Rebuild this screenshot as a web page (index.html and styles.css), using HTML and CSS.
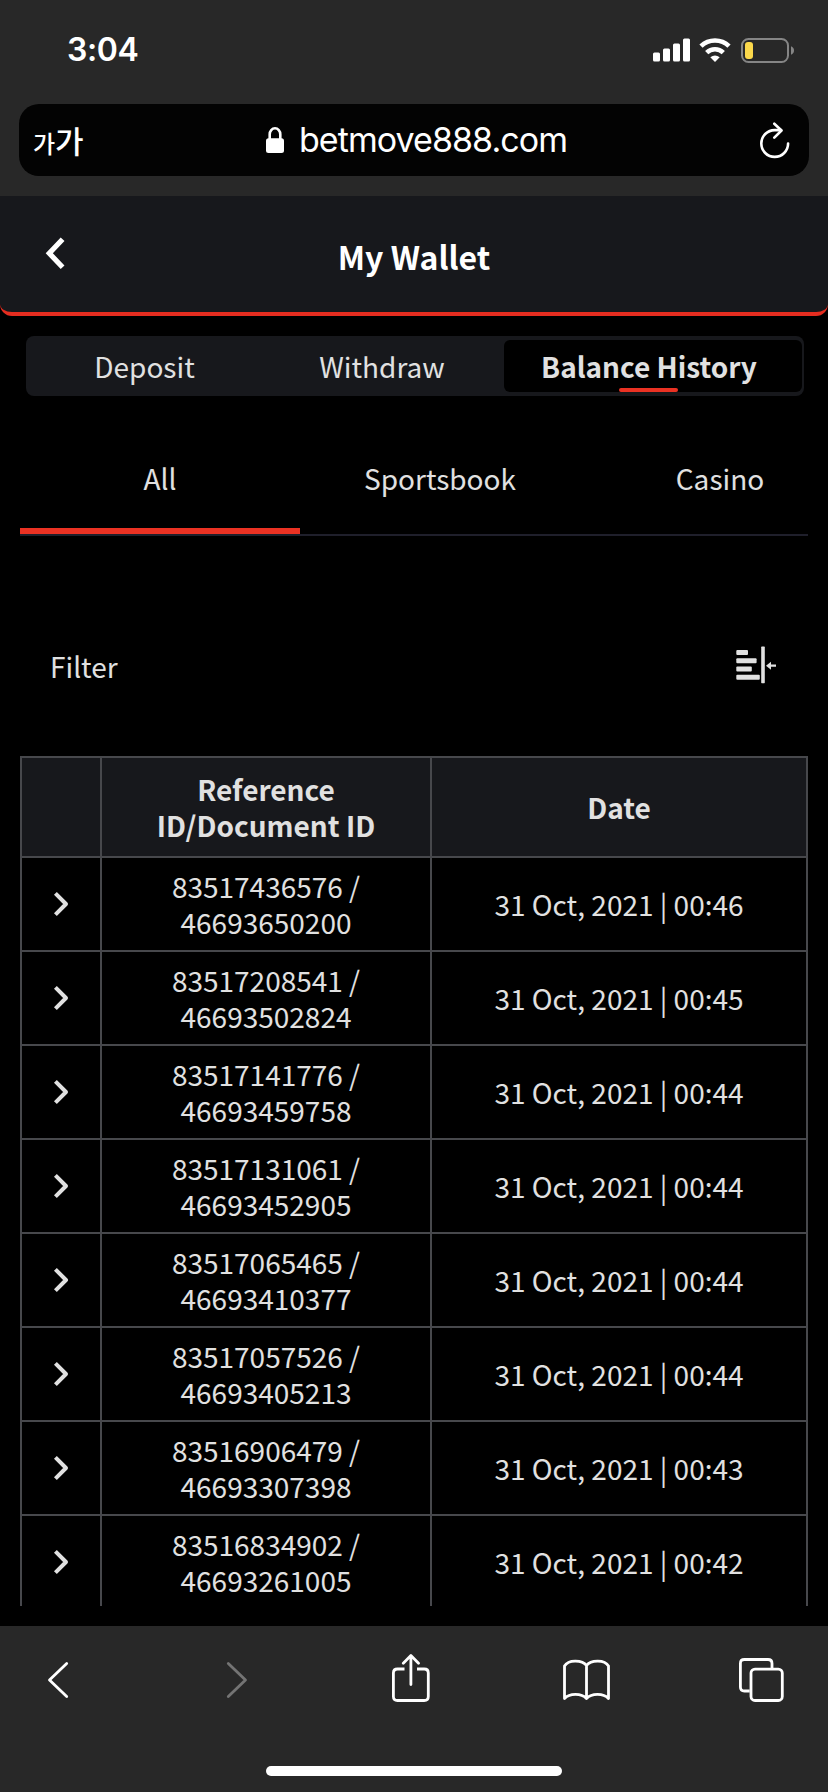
FILE: index.html
```html
<!DOCTYPE html>
<html lang="en">
<head>
<meta charset="utf-8">
<title>My Wallet</title>
<link rel="stylesheet" href="styles.css">
</head>
<body>
<div class="phone">
  <div class="browser-top">
    <div class="status">
      <span class="time">3:04</span>
      <div class="status-icons">
        <svg class="signal" viewBox="0 0 37 25"><rect x="0" y="14.5" width="7" height="9" rx="1.5"/><rect x="10" y="10.5" width="7" height="13" rx="1.5"/><rect x="20" y="5.5" width="7" height="18" rx="1.5"/><rect x="30" y=".5" width="7" height="23" rx="1.5"/></svg>
        <svg class="wifi" viewBox="0 0 32 25"><g fill="none" stroke="#fff" stroke-width="4.600"><path d="M2 8.200A20 20 0 0 1 30 8.200"/><path d="M7.700 14.600A12 12 0 0 1 24.300 14.600"/></g><path d="M11.300 19.300Q16 15.800 20.700 19.300L16 24Z"/></svg>
        <svg class="battery" viewBox="0 0 54 25"><rect x="1" y="1" width="46" height="23" rx="6.500" fill="none" stroke="#858585" stroke-width="2"/><rect x="4" y="4" width="8" height="17" rx="3" fill="#fbd84b"/><path d="M50 8.300Q53 9.500 53 12.500T50 16.700Z" fill="#858585"/></svg>
      </div>
    </div>
    <div class="address">
      <span class="text-size"><span class="small-ga">가</span><span class="large-ga">가</span></span>
      <span class="site">
        <svg class="lock" viewBox="0 0 18 26"><path d="M3.700 12V7.300a5.300 6 0 0 1 10.600 0V12" fill="none" stroke="#fff" stroke-width="2.600"/><rect x="0" y="11.300" width="18" height="14.700" rx="2.500"/></svg>
        <span class="url">betmove888.com</span>
      </span>
      <svg class="reload" viewBox="0 0 30 37"><g fill="none" stroke="#fff" stroke-width="2.600" stroke-linecap="round" stroke-linejoin="round"><path d="M28.100 21.500A13.400 13.400 0 1 1 14.700 8.100H21"/><path d="M14.300 1.700L21.500 8.500L14.300 15.700"/></g></svg>
    </div>
  </div>

  <div class="page">
    <header class="header">
      <svg class="back" viewBox="0 0 20 34"><path d="M17.600 3.200L4.300 17.300L17.600 31.200" fill="none" stroke="#fff" stroke-width="5.200"/></svg>
      <h1 class="title">My Wallet</h1>
    </header>
    <nav class="segments">
      <span class="segment">Deposit</span>
      <span class="segment">Withdraw</span>
      <span class="segment active">Balance History</span>
    </nav>
    <nav class="tabs">
      <span class="tab selected">All</span>
      <span class="tab">Sportsbook</span>
      <span class="tab">Casino</span>
    </nav>
    <div class="filter">
      <span>Filter</span>
      <svg class="filter-icon" viewBox="0 0 40 38"><rect x=".3" y="4" width="11.700" height="5" rx="1"/><rect x=".3" y="12.200" width="20.300" height="5" rx="1"/><rect x=".3" y="20.400" width="15.500" height="5" rx="1"/><rect x=".3" y="28.700" width="23.500" height="5" rx="1"/><rect x="25.200" y=".6" width="3.600" height="36.600" rx=".6"/><path d="M30 19.700L35 15.700V18.600H40V20.800H35V23.700Z"/></svg>
    </div>
    <div class="table-clip">
      <table class="history">
        <colgroup><col class="col-toggle"><col class="col-ref"><col class="col-date"></colgroup>
        <thead><tr><th></th><th>Reference<br>ID/Document ID</th><th>Date</th></tr></thead>
        <tbody>
          <tr><td><svg class="chev" viewBox="0 0 16 26"><path d="M2.400 2.400L13 13L2.400 23.600"/></svg></td><td>83517436576 /<br>46693650200</td><td>31 Oct, 2021 | 00:46</td></tr>
          <tr><td><svg class="chev" viewBox="0 0 16 26"><path d="M2.400 2.400L13 13L2.400 23.600"/></svg></td><td>83517208541 /<br>46693502824</td><td>31 Oct, 2021 | 00:45</td></tr>
          <tr><td><svg class="chev" viewBox="0 0 16 26"><path d="M2.400 2.400L13 13L2.400 23.600"/></svg></td><td>83517141776 /<br>46693459758</td><td>31 Oct, 2021 | 00:44</td></tr>
          <tr><td><svg class="chev" viewBox="0 0 16 26"><path d="M2.400 2.400L13 13L2.400 23.600"/></svg></td><td>83517131061 /<br>46693452905</td><td>31 Oct, 2021 | 00:44</td></tr>
          <tr><td><svg class="chev" viewBox="0 0 16 26"><path d="M2.400 2.400L13 13L2.400 23.600"/></svg></td><td>83517065465 /<br>46693410377</td><td>31 Oct, 2021 | 00:44</td></tr>
          <tr><td><svg class="chev" viewBox="0 0 16 26"><path d="M2.400 2.400L13 13L2.400 23.600"/></svg></td><td>83517057526 /<br>46693405213</td><td>31 Oct, 2021 | 00:44</td></tr>
          <tr><td><svg class="chev" viewBox="0 0 16 26"><path d="M2.400 2.400L13 13L2.400 23.600"/></svg></td><td>83516906479 /<br>46693307398</td><td>31 Oct, 2021 | 00:43</td></tr>
          <tr><td><svg class="chev" viewBox="0 0 16 26"><path d="M2.400 2.400L13 13L2.400 23.600"/></svg></td><td>83516834902 /<br>46693261005</td><td>31 Oct, 2021 | 00:42</td></tr>
        </tbody>
      </table>
    </div>
  </div>

  <div class="browser-bottom">
    <div class="tools">
      <svg class="tool tool-back" viewBox="0 0 52 50"><path d="M32.700 9.500L15.500 26L32.700 42.500"/></svg>
      <svg class="tool tool-forward" viewBox="0 0 47 50"><path d="M15.300 9.500L32.500 26L15.300 42.500"/></svg>
      <svg class="tool" viewBox="0 0 48 50"><path d="M17.500 15H10.500Q6.400 15 6.400 19V42.500Q6.400 46.500 10.500 46.500H37.200Q41.300 46.500 41.300 42.500V19Q41.300 15 37.200 15H30" stroke-linecap="butt"/><path d="M23.900 30.500V1.800M16.300 9.200L23.900 1.600L31.500 9.200"/></svg>
      <svg class="tool" viewBox="0 0 48 50"><path d="M24.500 11.500C20.500 6 6.500 5 2.500 12V44.500C7.500 39 19.500 39 24.500 44.500C29.500 39 41.500 39 46.500 44.500V12C42.500 5 28.500 6 24.500 11.500V44.500"/></svg>
      <svg class="tool" viewBox="0 0 48 50"><path d="M12.700 37H7.400Q3.400 37 3.400 33V9.500Q3.400 5.500 7.400 5.500H31Q35 5.500 35 9.500V14.500" stroke-linecap="butt"/><rect x="14" y="15.100" width="31.300" height="31.400" rx="4"/></svg>
    </div>
    <div class="home"></div>
  </div>
</div>
</body>
</html>
```
FILE: styles.css
```css
* { box-sizing: border-box; }
body { margin: 0; background: #000; }
svg { display: block; fill: #fff; flex: none; }
.phone {
  width: 828px;
  height: 1792px;
  display: flex;
  flex-direction: column;
  overflow: hidden;
  color: #e1e1e1;
  font: 28px/36px "Noto Sans CJK KR", "Noto Sans", sans-serif;
}

.browser-top { height: 196px; background: #282828; color: #fff; flex: none; }
.status { height: 104px; padding: 0 34px 4px 67px; display: flex; align-items: center; justify-content: space-between; }
.time { font: 600 32px/40px Inter, sans-serif; letter-spacing: -0.4px; }
.status-icons { display: flex; align-items: center; }
.signal { width: 37px; height: 25px; }
.wifi { width: 32px; height: 25px; margin: 0 10px 0 9px; }
.battery { width: 54px; height: 25px; margin-right: -1px; }
.address {
  height: 72px;
  margin: 0 19px;
  padding: 0 19px 0 14px;
  border-radius: 20px;
  background: #030303;
  display: grid;
  grid-template-columns: 232px 1fr 30px;
  align-items: center;
}
.text-size { display: flex; align-items: baseline; line-height: 44px; font-weight: 500; padding-top: 2px; }
.small-ga { font-size: 24px; }
.large-ga { font-size: 31px; }
.site { display: flex; align-items: center; padding-left: 1px; }
.lock { width: 18px; height: 26px; }
.url { font: 400 34px/44px Inter, sans-serif; letter-spacing: -0.95px; margin-left: 15px; white-space: nowrap; }
.reload { width: 30px; height: 37px; }

.page { height: 1430px; background: #000; flex: none; }
.header {
  height: 120px;
  padding: 0 45px;
  border-bottom: 4px solid #e52d20;
  border-radius: 0 0 12px 12px;
  background: #17181c;
  display: grid;
  grid-template-columns: 20px 1fr 20px;
  align-items: center;
}
.back { width: 20px; height: 34px; margin-bottom: 2px; }
.title { margin: 4px 0 0; font-size: 32px; line-height: 40px; font-weight: 700; color: #fff; text-align: center; }

.segments {
  height: 60px;
  margin: 20px 24px 0 26px;
  padding: 4px 2px 4px 0;
  border-radius: 8px;
  background: #17181c;
  display: grid;
  grid-template-columns: 237px 241px 298px;
}
.segment { text-align: center; line-height: 52px; }
.segment:nth-child(2) { padding-right: 3px; }
.segment.active {
  position: relative;
  padding-right: 8px;
  border-radius: 6px;
  background: #000;
  font-weight: 700;
}
.segment.active::after {
  content: "";
  position: absolute;
  left: 115px;
  bottom: 0;
  width: 59px;
  height: 4px;
  border-radius: 2px;
  background: #eb3223;
}

.tabs {
  height: 116px;
  margin: 24px 20px 0;
  border-bottom: 2px solid #1f1f2b;
  display: flex;
  overflow: hidden;
}
.tab { flex: 0 0 280px; padding-top: 40px; text-align: center; }
.tab.selected { border-bottom: 6px solid #eb3223; }

.filter {
  height: 180px;
  margin-top: 40px;
  padding: 0 52px 0 50px;
  display: flex;
  align-items: center;
  justify-content: space-between;
}
.filter-icon { width: 40px; height: 38px; fill: #e1e1e1; margin-bottom: 2px; }

.table-clip { height: 850px; margin: 0 20px; overflow: hidden; }
.history { width: 788px; border-collapse: collapse; table-layout: fixed; }
.col-toggle { width: 80px; }
.col-ref { width: 330px; }
.history th, .history td { padding: 0; border: 2px solid #47484c; text-align: center; vertical-align: middle; }
.history th { height: 100px; background: #17181c; font-weight: 700; }
.history td { height: 94px; }
.chev { width: 16px; height: 26px; margin: 0 auto; fill: none; stroke: #e1e1e1; stroke-width: 4; stroke-linejoin: round; }

.browser-bottom { height: 166px; padding-top: 28px; background: #282828; flex: none; }
.tools { display: flex; gap: 127px; padding-left: 34px; }
.tool { width: 48px; height: 50px; fill: none; stroke: #fff; stroke-width: 2.8; stroke-linecap: round; stroke-linejoin: round; }
.tool-back { width: 52px; }
.tool-forward { width: 47px; stroke: #747474; }
.home { width: 296px; height: 10px; margin: 62px auto 0; border-radius: 5px; background: #fff; }
```
